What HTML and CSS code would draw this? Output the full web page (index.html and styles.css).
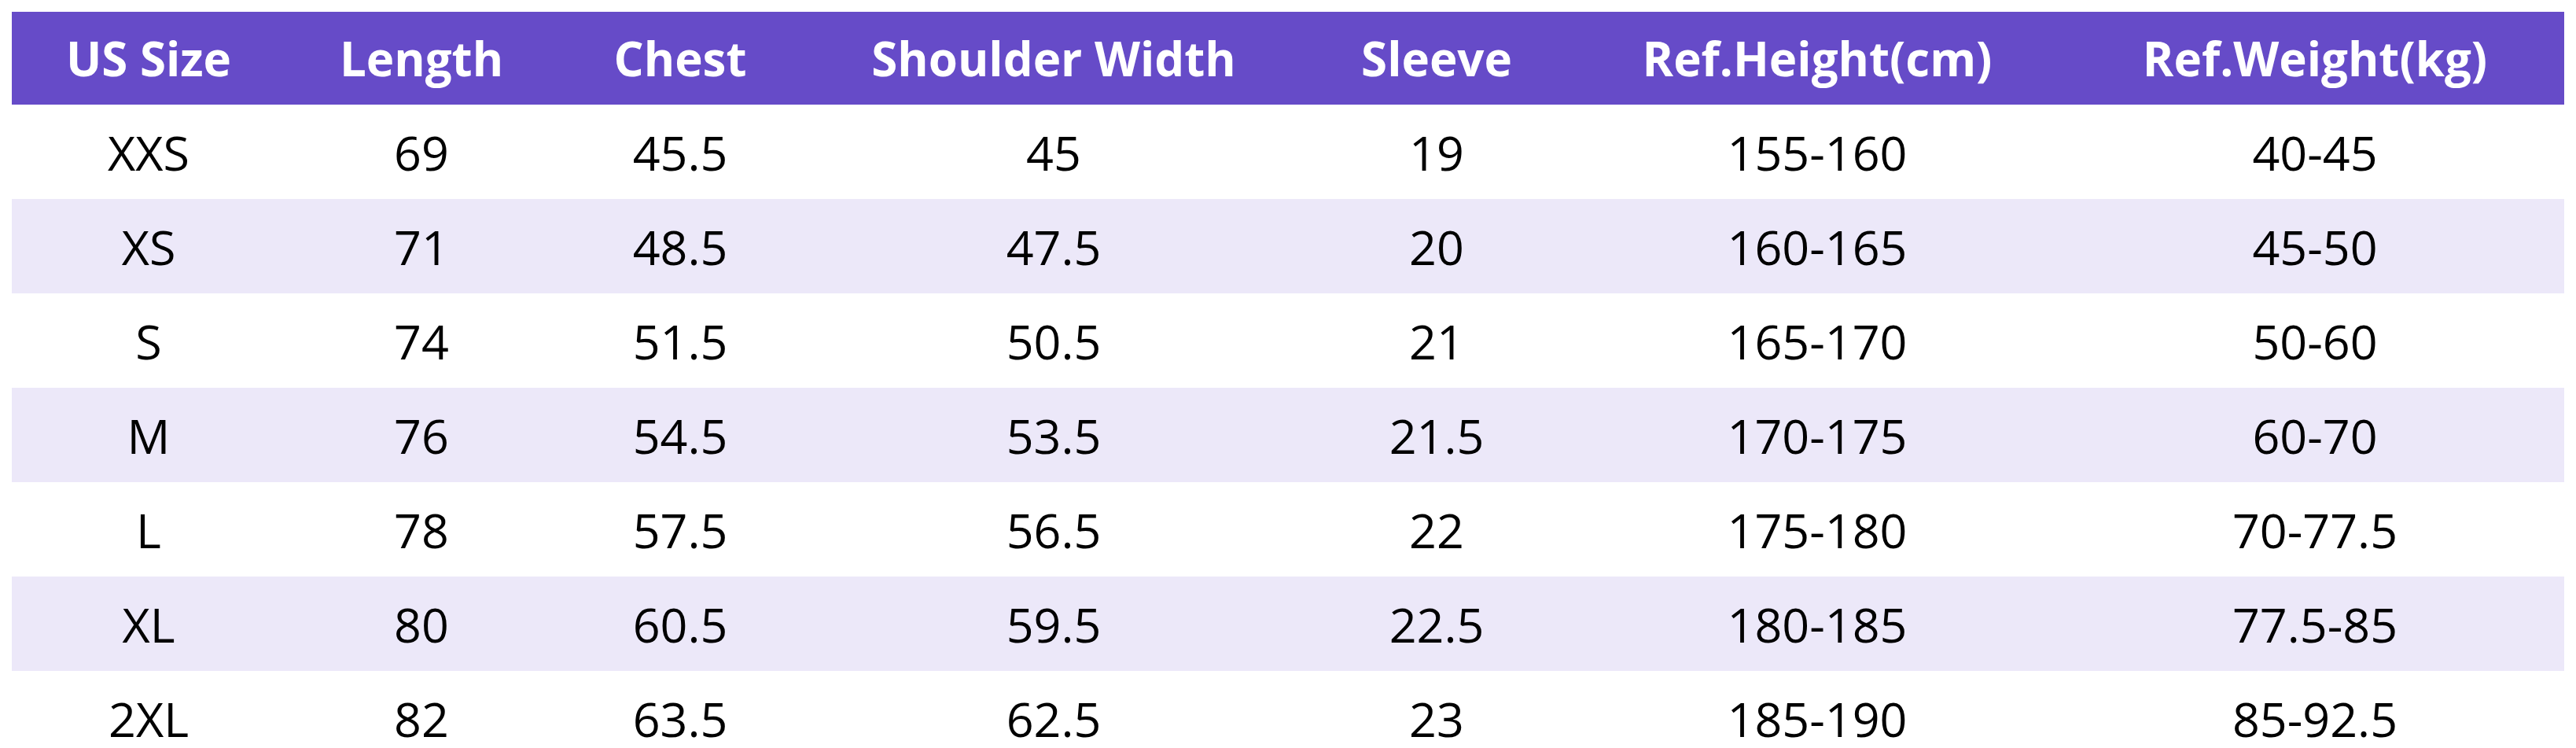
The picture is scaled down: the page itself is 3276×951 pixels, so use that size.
FILE: index.html
```html
<!DOCTYPE html>
<html lang="en">
<head>
<meta charset="utf-8">
<title>Size Chart</title>
<link rel="stylesheet" href="styles.css">
</head>
<body>
<table class="size-table">
  <colgroup>
    <col class="c-size">
    <col class="c-length">
    <col class="c-chest">
    <col class="c-shoulder">
    <col class="c-sleeve">
    <col class="c-height">
    <col class="c-weight">
  </colgroup>
  <thead>
    <tr class="head-row">
      <th>US Size</th><th>Length</th><th>Chest</th><th>Shoulder Width</th><th>Sleeve</th><th>Ref.Height(cm)</th><th>Ref.Weight(kg)</th>
    </tr>
  </thead>
  <tbody>
    <tr class="row"><td>XXS</td><td>69</td><td>45.5</td><td>45</td><td>19</td><td>155-160</td><td>40-45</td></tr>
    <tr class="row alt"><td>XS</td><td>71</td><td>48.5</td><td>47.5</td><td>20</td><td>160-165</td><td>45-50</td></tr>
    <tr class="row"><td>S</td><td>74</td><td>51.5</td><td>50.5</td><td>21</td><td>165-170</td><td>50-60</td></tr>
    <tr class="row alt"><td>M</td><td>76</td><td>54.5</td><td>53.5</td><td>21.5</td><td>170-175</td><td>60-70</td></tr>
    <tr class="row"><td>L</td><td>78</td><td>57.5</td><td>56.5</td><td>22</td><td>175-180</td><td>70-77.5</td></tr>
    <tr class="row alt"><td>XL</td><td>80</td><td>60.5</td><td>59.5</td><td>22.5</td><td>180-185</td><td>77.5-85</td></tr>
    <tr class="row"><td>2XL</td><td>82</td><td>63.5</td><td>62.5</td><td>23</td><td>185-190</td><td>85-92.5</td></tr>
  </tbody>
</table>
</body>
</html>
```
FILE: styles.css
```css
html, body {
  margin: 0;
  padding: 0;
  background: #ffffff;
}

body {
  padding: 15px;
  font-family: "Open Sans", "Noto Sans", "Liberation Sans", sans-serif;
}

.size-table {
  border-collapse: collapse;
  border-spacing: 0;
  table-layout: fixed;
  width: 3246px;
}

.c-size { width: 348px; }
.c-length { width: 346px; }
.c-chest { width: 312px; }
.c-shoulder { width: 638px; }
.c-sleeve { width: 336px; }
.c-height { width: 632px; }
.c-weight { width: 634px; }

.head-row {
  background: #664bc8;
  height: 118px;
}

.head-row th {
  padding: 0;
  color: #ffffff;
  font-weight: 700;
  font-size: 60px;
  line-height: 1;
  text-align: center;
  vertical-align: middle;
  white-space: nowrap;
}

.row {
  height: 120px;
  background: #ffffff;
}

.row.alt {
  background: #ece8f9;
}

.row td {
  padding: 0;
  color: #000000;
  font-weight: 400;
  font-size: 61px;
  line-height: 1;
  text-align: center;
  vertical-align: middle;
  white-space: nowrap;
}
```
